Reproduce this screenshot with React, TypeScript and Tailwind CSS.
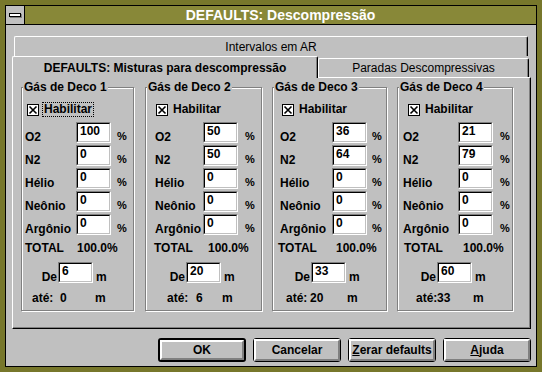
import React from "react";

type Deco = {
  n: number;
  ml: string;
  w: string;
  cb: string;
  row: string;
  lab: string;
  pct: string;
  tot: string;
  totW: string;
  de: string;
  ate: string;
  ateW: string;
  ateN: string;
  vals: string[];
  deVal: string;
  ateVal: string;
  focus?: boolean;
};

const gases = ["O2", "N2", "Hélio", "Neônio", "Argônio"];

const decos: Deco[] = [
  {
    n: 1, ml: "ml-[8px]", w: "w-[113px]", cb: "pl-[5px]", row: "pl-[3px]", lab: "w-[51px]", pct: "ml-[6px]",
    tot: "pl-[3px]", totW: "w-[52px]", de: "w-[36px]", ate: "pl-[10px]", ateW: "w-[28px]", ateN: "w-[35px]",
    vals: ["100", "0", "0", "0", "0"], deVal: "6", ateVal: "0", focus: true,
  },
  {
    n: 2, ml: "ml-[11px]", w: "w-[117px]", cb: "pl-[10px]", row: "pl-[9px]", lab: "w-[48px]", pct: "ml-[7px]",
    tot: "pl-[8px]", totW: "w-[54px]", de: "w-[40px]", ate: "pl-[21px]", ateW: "w-[29px]", ateN: "w-[26px]",
    vals: ["50", "50", "0", "0", "0"], deVal: "20", ateVal: "6",
  },
  {
    n: 3, ml: "ml-[10px]", w: "w-[115px]", cb: "pl-[9px]", row: "pl-[7px]", lab: "w-[52px]", pct: "ml-[5px]",
    tot: "pl-[5px]", totW: "w-[58px]", de: "w-[38px]", ate: "pl-[13px]", ateW: "w-[24px]", ateN: "w-[37px]",
    vals: ["36", "64", "0", "0", "0"], deVal: "33", ateVal: "20",
  },
  {
    n: 4, ml: "ml-[10px]", w: "w-[116px]", cb: "pl-[10px]", row: "pl-[5px]", lab: "w-[55px]", pct: "ml-[7px]",
    tot: "pl-[6px]", totW: "w-[59px]", de: "w-[39px]", ate: "pl-[18px]", ateW: "w-[21px]", ateN: "w-[36px]",
    vals: ["21", "79", "0", "0", "0"], deVal: "60", ateVal: "33",
  },
];

function Field({ value }: { value: string }) {
  return (
    <div className="h-[21px] w-[35px] shrink-0 border border-t-[#808080] border-l-[#808080] border-r-white border-b-white">
      <div className="h-full w-full border border-t-black border-l-black border-r-[#c0c0c0] border-b-[#c0c0c0] bg-white pl-[2px] text-[12px] font-bold leading-[14px]">
        {value}
      </div>
    </div>
  );
}

function CheckX() {
  return (
    <svg width="12" height="12" viewBox="0 0 12 12" className="shrink-0">
      <rect x="0.5" y="0.5" width="11" height="11" fill="#fff" stroke="#000" />
      <path d="M2.5 2.5 L9.5 9.5 M9.5 2.5 L2.5 9.5" stroke="#000" strokeWidth="1.6" />
    </svg>
  );
}

function DecoGroup({ g }: { g: Deco }) {
  return (
    <div className={`relative h-[224px] shrink-0 border border-[#808080] shadow-[inset_1px_1px_0_#fff,1px_1px_0_#fff] ${g.ml} ${g.w}`}>
      <span className="absolute -top-[8px] left-[1px] bg-[#c0c0c0] px-[1px] text-[12px] font-bold leading-[14px]">
        Gás de Deco {g.n}
      </span>

      <div className={`mt-[15px] flex h-[13px] items-center ${g.cb}`}>
        <CheckX />
        <span
          className={`ml-[3px] border px-[1px] text-[12px] font-bold leading-[13px] ${
            g.focus ? "border-dotted border-black" : "border-transparent"
          }`}
        >
          Habilitar
        </span>
      </div>

      <div className="mt-[6px]">
        {gases.map((name, i) => (
          <div key={name} className={`flex h-[23px] items-start ${g.row}`}>
            <span className={`mt-[8px] shrink-0 text-[12px] font-bold leading-[14px] ${g.lab}`}>{name}</span>
            <Field value={g.vals[i]} />
            <span className={`mt-[7px] text-[11px] font-bold leading-[14px] ${g.pct}`}>%</span>
          </div>
        ))}
      </div>

      <div className={`mt-[4px] flex text-[12px] font-bold leading-[14px] ${g.tot}`}>
        <span className={g.totW}>TOTAL</span>
        <span className="whitespace-nowrap">100.0%</span>
      </div>

      <div className="mt-[7px] flex items-start">
        <span className={`mt-[8px] flex justify-end pr-[1px] text-[12px] font-bold leading-[14px] ${g.de}`}>De</span>
        <Field value={g.deVal} />
        <span className="ml-[3px] mt-[8px] text-[12px] font-bold leading-[14px]">m</span>
      </div>

      <div className={`mt-[7px] flex text-[12px] font-bold leading-[14px] ${g.ate}`}>
        <span className={g.ateW}>até:</span>
        <span className={g.ateN}>{g.ateVal}</span>
        <span>m</span>
      </div>
    </div>
  );
}

function Btn({ children, primary }: { children: React.ReactNode; primary?: boolean }) {
  return (
    <div
      className={`h-[24px] w-[88px] rounded-[3px] border-black ${primary ? "border-2" : "border"}`}
    >
      <div className="flex h-full w-full items-center justify-center border-2 border-t-white border-l-white border-r-[#808080] border-b-[#808080] text-[12px] font-bold leading-[14px]">
        {children}
      </div>
    </div>
  );
}

export default function App() {
  return (
    <div className="h-[372px] w-[542px] bg-[#77772b] p-[5px] font-['Liberation_Sans',Arial,sans-serif] text-black">
      <div className="flex h-full flex-col border border-black bg-[#c0c0c0]">
        {/* title bar */}
        <div className="flex h-[19px] shrink-0 border-b border-black">
          <div className="flex w-[19px] items-center justify-center border-r border-black bg-[#c0c0c0]">
            <div className="h-[4px] w-[12px] border border-black bg-white shadow-[1px_1px_0_#808080]" />
          </div>
          <div className="flex flex-1 items-center justify-center bg-[#888838] text-[14px] font-bold leading-[16px] text-white">
            DEFAULTS: Descompressão
          </div>
        </div>

        <div className="flex flex-1 flex-col pl-[6px] pr-[5px] pt-[11px]">
          {/* back row tab */}
          <div className="ml-[2px] flex h-[20px] w-[514px] items-center justify-center rounded-t-[2px] border-t border-l border-r border-t-white border-l-white border-r-black shadow-[inset_-1px_0_0_#808080] text-[12px] leading-[14px]">
            Intervalos em AR
          </div>

          {/* front row tabs */}
          <div className="flex h-[21px] items-start">
            <div className="relative z-10 flex h-[22px] w-[306px] items-center justify-center rounded-t-[2px] border-t border-l border-r border-t-white border-l-white border-r-black bg-[#c0c0c0] shadow-[inset_-1px_0_0_#808080] text-[12px] font-bold leading-[14px]">
              DEFAULTS: Misturas para descompressão
            </div>
            <div className="mt-[2px] flex h-[19px] w-[211px] items-center justify-center rounded-t-[2px] border-t border-l border-r border-t-white border-l-white border-r-black shadow-[inset_-1px_0_0_#808080] text-[12px] leading-[14px]">
              Paradas Descompressivas
            </div>
          </div>

          {/* page */}
          <div className="flex h-[252px] w-[519px] items-start border border-t-white border-l-white border-r-black border-b-black pt-[9px] shadow-[inset_-1px_-1px_0_#808080]">
            {decos.map((g) => (
              <DecoGroup key={g.n} g={g} />
            ))}
          </div>

          {/* buttons */}
          <div className="mt-[9px] flex w-[519px] justify-end gap-[7px]">
            <Btn primary>OK</Btn>
            <Btn>Cancelar</Btn>
            <Btn>
              <span>
                <u>Z</u>erar defaults
              </span>
            </Btn>
            <Btn>
              <span>
                <u>A</u>juda
              </span>
            </Btn>
          </div>
        </div>
      </div>
    </div>
  );
}
